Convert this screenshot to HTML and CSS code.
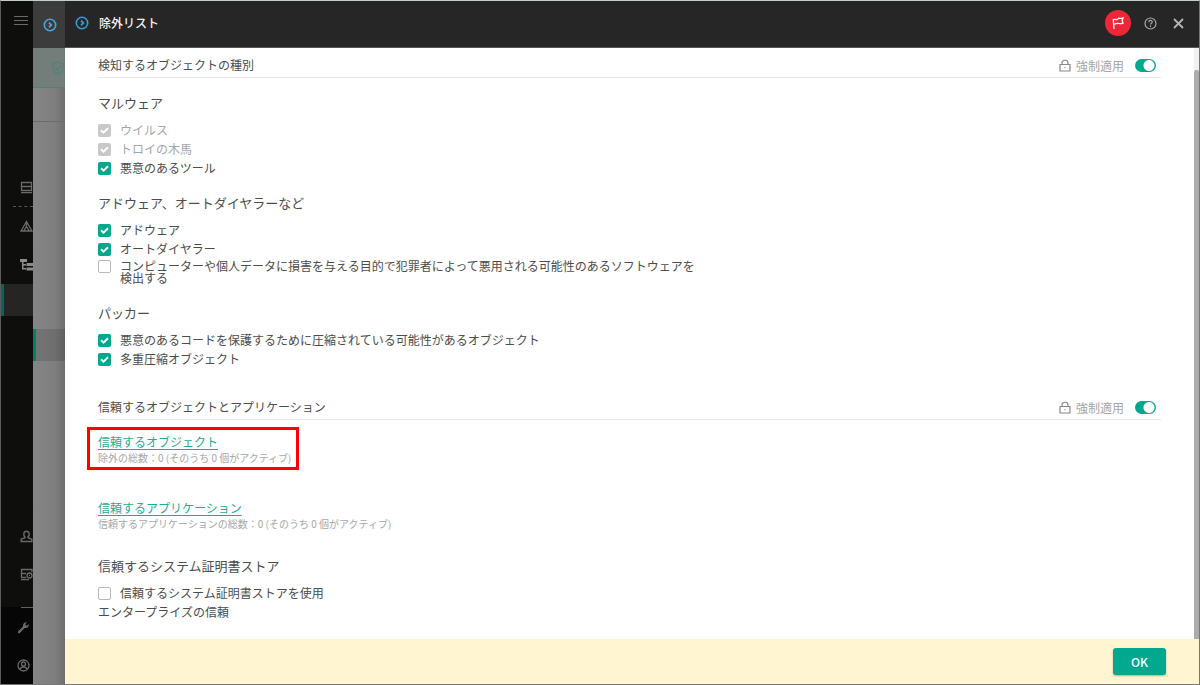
FILE: index.html
```html
<!DOCTYPE html>
<html lang="ja">
<head>
  <meta charset="UTF-8">
  <meta name="viewport" content="width=device-width, initial-scale=1.0">
  <title>除外リスト</title>
  <link rel="stylesheet" href="styles.css">
</head>
<body>
  <div class="app">
    <nav class="sidebar">
      <button class="nav-item menu" aria-label="メニュー">
        <svg width="14" height="12" viewBox="0 0 14 12" stroke="currentColor" fill="none"><path d="M0 1.500h14M0 5.500h14M0 9.500h14"/></svg>
      </button>
      <div class="nav-group">
        <a href="#" class="nav-item server" aria-label="サーバー">
          <svg width="13" height="13" viewBox="0 0 13 13" stroke="currentColor" fill="none" stroke-width="1.300"><path d="M1.500 1.500h10v8h-10zM1.500 5.500h10M1 11.700h11"/></svg>
        </a>
        <a href="#" class="nav-item" aria-label="監視">
          <svg width="13" height="13" viewBox="0 0 13 13" stroke="currentColor" fill="none" stroke-width="1.300"><path d="M6.500 1.500L12 11H1zM4 10.500l2.500-4 2.500 4M6.500 2v4"/></svg>
        </a>
        <a href="#" class="nav-item bright" aria-label="デバイス">
          <svg width="13" height="13" viewBox="0 0 13 13" fill="currentColor"><path d="M0 1h7v3H0zM2 4h1.500v2H6v1.500H3.500V10H6v1.500H2zM6.500 5H13v3H6.500zM6.500 9.500H13v3H6.500z"/></svg>
        </a>
        <a href="#" class="nav-item active" aria-label="ポリシー"></a>
      </div>
      <div class="nav-group bottom">
        <a href="#" class="nav-item" aria-label="ユーザー">
          <svg width="13" height="13" viewBox="0 0 13 13" stroke="currentColor" fill="none" stroke-width="1.400"><path d="M5 7C3 5 3.500 1.200 6.500 1.200S10 5 8 7v.7l3.800 1.500v2.300H1.200V9.200L5 7.700z"/></svg>
        </a>
        <a href="#" class="nav-item" aria-label="操作">
          <svg width="13" height="13" viewBox="0 0 13 13" stroke="currentColor" fill="none" stroke-width="1.300"><path d="M12 4V1.500H1.500v8H6M1.500 5.500H6M1 11.700h8"/><circle cx="9.500" cy="7.500" r="2.500"/><path d="M9 7.500h1"/></svg>
        </a>
      </div>
      <div class="nav-group tools">
        <a href="#" class="nav-item" aria-label="設定">
          <svg width="13" height="13" viewBox="0 0 13 13" fill="currentColor"><path d="M1 10.500l5-5C5.500 3 7.500.8 10 1.300L8.300 3l.4 1.300 1.300.4 1.800-1.700C12.300 5.500 10 7.500 7.600 7L2.600 12.200C1.800 12.800.4 11.500 1 10.500z"/></svg>
        </a>
        <a href="#" class="nav-item" aria-label="アカウント">
          <svg width="13" height="13" viewBox="0 0 13 13" stroke="currentColor" fill="none" stroke-width="1.300"><circle cx="6.500" cy="6.500" r="5.500"/><circle cx="6.500" cy="5" r="2"/><path d="M3 10.500c.5-2 1.500-2.500 3.500-2.500s3 .5 3.500 2.500"/></svg>
        </a>
      </div>
    </nav>

    <div class="backdrop">
      <div class="backdrop-head">
        <svg width="14" height="14" viewBox="0 0 14 14" stroke="currentColor" fill="none" stroke-width="1.600"><circle cx="7" cy="7" r="5.700"/><path d="M6 4.700L8.300 7 6 9.300" stroke-width="1.800"/></svg>
      </div>
      <div class="backdrop-status">
        <svg width="14" height="14" viewBox="0 0 14 14" stroke="currentColor" fill="none" stroke-width="1.200"><path d="M7 1l5 2v4c0 3-2 5-5 6-3-1-5-3-5-6V3zM4.500 7l2 2 3.500-3.500"/></svg>
      </div>
      <div class="backdrop-tabs"></div>
      <div class="backdrop-active"></div>
    </div>

    <main class="panel">
      <header class="panel-head">
        <svg class="panel-icon" width="14" height="14" viewBox="0 0 14 14" stroke="currentColor" fill="none" stroke-width="1.600"><circle cx="7" cy="7" r="5.700"/><path d="M6 4.700L8.300 7 6 9.300" stroke-width="1.800"/></svg>
        <h1>除外リスト</h1>
        <button class="flag" aria-label="通知">
          <svg width="14" height="14" viewBox="0 0 14 14" stroke="currentColor" fill="none" stroke-width="1.300"><path d="M3 13L2.300 3.700c1.500-.7 2.700.1 4.200-.2L7.500 2.200c1.500.5 3 .3 4.500-.3l-.8 2.600.8 2.600c-1.500.7-2.600.7-4.300.3C6 7.300 4 7.800 2.600 8.500"/></svg>
        </button>
        <button class="icon-button" aria-label="ヘルプ">
          <svg width="13" height="13" viewBox="0 0 13 13" stroke="currentColor" fill="none" stroke-width="1.200"><circle cx="6.500" cy="6.500" r="5.500"/><path d="M4.800 5.200c0-2.400 3.500-2.200 3.500-.2 0 1.200-1.800 1.300-1.800 2.600M6.500 8.600V10"/></svg>
        </button>
        <button class="icon-button close" aria-label="閉じる">
          <svg width="11" height="11" viewBox="0 0 11 11" stroke="currentColor" fill="none" stroke-width="1.800"><path d="M1 1l9 9M10 1l-9 9"/></svg>
        </button>
      </header>

      <div class="panel-scroll">
        <div class="panel-body">
          <section>
            <div class="section-head">
              <h2>検知するオブジェクトの種別</h2>
              <svg class="lock" width="12" height="13" viewBox="0 0 12 13" stroke="currentColor" fill="none" stroke-width="1.200"><path d="M1 5.500h10v6.500H1zM3 5.500V4c0-3.700 6-3.700 6 0v1.500M5.500 8.700h1"/></svg>
              <label for="force-types">強制適用</label>
              <input type="checkbox" class="toggle" id="force-types" checked>
            </div>

            <h3>マルウェア</h3>
            <div class="options">
              <label class="option disabled"><input type="checkbox" checked disabled>ウイルス</label>
              <label class="option disabled"><input type="checkbox" checked disabled>トロイの木馬</label>
              <label class="option"><input type="checkbox" checked>悪意のあるツール</label>
            </div>

            <h3>アドウェア、オートダイヤラーなど</h3>
            <div class="options">
              <label class="option"><input type="checkbox" checked>アドウェア</label>
              <label class="option"><input type="checkbox" checked>オートダイヤラー</label>
              <label class="option multiline"><input type="checkbox">コンピューターや個人データに損害を与える目的で犯罪者によって悪用される可能性のあるソフトウェアを検出する</label>
            </div>

            <h3>パッカー</h3>
            <div class="options">
              <label class="option"><input type="checkbox" checked>悪意のあるコードを保護するために圧縮されている可能性があるオブジェクト</label>
              <label class="option"><input type="checkbox" checked>多重圧縮オブジェクト</label>
            </div>
          </section>

          <section class="trusted">
            <div class="section-head">
              <h2>信頼するオブジェクトとアプリケーション</h2>
              <svg class="lock" width="12" height="13" viewBox="0 0 12 13" stroke="currentColor" fill="none" stroke-width="1.200"><path d="M1 5.500h10v6.500H1zM3 5.500V4c0-3.700 6-3.700 6 0v1.500M5.500 8.700h1"/></svg>
              <label for="force-trusted">強制適用</label>
              <input type="checkbox" class="toggle" id="force-trusted" checked>
            </div>

            <div class="links">
              <div class="link-block highlight">
                <a href="#">信頼するオブジェクト</a>
                <p>除外の総数：0 (そのうち 0 個がアクティブ)</p>
              </div>
              <div class="link-block">
                <a href="#">信頼するアプリケーション</a>
                <p>信頼するアプリケーションの総数：0 (そのうち 0 個がアクティブ)</p>
              </div>
            </div>

            <h3 class="store-title">信頼するシステム証明書ストア</h3>
            <div class="options">
              <label class="option"><input type="checkbox">信頼するシステム証明書ストアを使用</label>
              <p class="store-name">エンタープライズの信頼</p>
            </div>
          </section>
        </div>
        <div class="scrollbar"><div class="thumb"></div></div>
      </div>

      <footer class="panel-foot">
        <button class="ok">OK</button>
      </footer>
    </main>
  </div>
</body>
</html>
```
FILE: styles.css
```css
* {
  box-sizing: border-box;
}

body {
  margin: 0;
  font-family: "Noto Sans CJK JP", sans-serif;
  font-size: 12px;
  color: #4c4c4c;
}

h1, h2, h3, p {
  margin: 0;
  font-weight: 400;
}

button {
  padding: 0;
  border: 0;
  background: none;
  font-family: inherit;
  color: inherit;
}

svg {
  display: block;
  flex: none;
}

.app {
  display: flex;
  min-height: 100vh;
  border: 1px solid #777;
  border-top-color: #c5cdcb;
  border-left-color: #5c5c5c;
}

/* Main navigation, partly covered by the open panel */
.sidebar {
  display: flex;
  flex-direction: column;
  width: 32px;
  flex: none;
  background: #0e0e0c;
  color: #6a6a6a;
  overflow: hidden;
}

.nav-item {
  display: flex;
  align-items: center;
  flex: none;
  height: 38px;
  padding-left: 19px;
  color: inherit;
}

.nav-item.menu {
  padding-left: 13px;
  height: 39px;
}

.nav-group {
  margin-top: 128px;
}

.nav-item.server {
  border-bottom: 1px dashed #585858;
  margin-left: 12px;
  padding-left: 7px;
  height: 39px;
}

.nav-item.bright {
  height: 39px;
  color: #8b8b8b;
}

.nav-item.active {
  height: 32px;
  background: #252523;
  border-left: 3px solid #00695a;
}

.nav-group.bottom {
  margin-top: auto;
  padding-bottom: 14px;
}

.nav-group.tools {
  margin-top: 0;
  background: #060606;
}

.tools .nav-item {
  padding-left: 16px;
}

.tools::before {
  content: "";
  display: block;
  height: 1px;
  margin-left: 20px;
  background: #626262;
}

/* Dimmed page behind the panel */
.backdrop {
  width: 32px;
  flex: none;
  background: linear-gradient(to right, #858585, #7e7e7e 70%, #6e6e6e);
}

.backdrop-head {
  display: flex;
  align-items: center;
  justify-content: center;
  height: 47px;
  padding-left: 2px;
  background: #3c3c3c;
  color: #4aa5dc;
}

.backdrop-status {
  display: flex;
  align-items: center;
  justify-content: flex-end;
  height: 40px;
  background: #737e7b;
  border-bottom: 1px solid #4f8376;
  color: #4f8376;
}

.backdrop-tabs {
  height: 34px;
  border-bottom: 1px solid #6b6b6b;
}

.backdrop-active {
  height: 32px;
  margin-top: 207px;
  background: rgba(0, 0, 0, 0.12);
  border-left: 3px solid #00816d;
}

.panel {
  display: flex;
  flex-direction: column;
  flex: 1;
  min-width: 0;
  background: #fff;
}

.panel-head {
  display: flex;
  align-items: center;
  height: 47px;
  padding: 0 15px 2px 10px;
  background: #262626;
  border-bottom: 1px solid #555;
  color: #a8a8a8;
}

.panel-icon {
  color: #3a9ad9;
}

h1 {
  flex: 1;
  margin-left: 10px;
  font-size: 12px;
  line-height: 16px;
  font-weight: 500;
  color: #f2f2f2;
}

.flag {
  display: flex;
  align-items: center;
  justify-content: center;
  width: 26px;
  height: 26px;
  border-radius: 50%;
  background: #ee2737;
  color: #fff;
}

.icon-button {
  margin-left: 13px;
}

.icon-button.close {
  margin-left: 16px;
  color: #b5b5b5;
}

.panel-scroll {
  display: flex;
  flex: 1;
}

.panel-body {
  flex: 1;
  padding: 0 33px 16px;
}

.scrollbar {
  display: flex;
  width: 5px;
  padding-top: 22px;
  background: #f1f1f1;
}

.thumb {
  flex: 1;
  border-radius: 2px 2px 0 0;
  background: #ababab;
}

.section-head {
  display: flex;
  align-items: center;
  height: 30px;
  padding: 5px 5px 0 0;
  border-bottom: 1px solid #e8e8e8;
  color: #a6a6a6;
}

h2 {
  flex: 1;
  padding-bottom: 2px;
  font-size: 12px;
  color: #4c4c4c;
}

.lock {
  margin-right: 5px;
  color: #888;
}

.toggle {
  appearance: none;
  width: 21px;
  height: 13px;
  margin: 0 0 0 11px;
  border-radius: 7px;
  background: radial-gradient(circle at 14px 50%, #fff 5px, #00a88e 6px);
}

h3 {
  margin-top: 15px;
  font-size: 13px;
  line-height: 20px;
}

.options {
  margin-top: 8px;
}

.option {
  display: flex;
  align-items: center;
  width: fit-content;
  line-height: 18px;
  padding-bottom: 1px;
}

.option input {
  appearance: none;
  flex: none;
  width: 13px;
  height: 13px;
  margin: 0 9px 0 0;
  border: 1px solid #b8b8b8;
  border-radius: 2px;
  background: #fff;
}

.option input:checked {
  border: 0;
  background: #00a88e url("data:image/svg+xml,%3Csvg xmlns='http://www.w3.org/2000/svg' viewBox='0 0 13 13'%3E%3Cpath d='M3 6.2l2.500 2.500L10 4.200' fill='none' stroke='%23fff' stroke-width='2'/%3E%3C/svg%3E");
}

.option input:disabled {
  background-color: #c9c9c9;
}

.option.disabled {
  color: #a6a6a6;
}

.option.multiline {
  align-items: flex-start;
  max-width: 600px;
  padding: 1px 0 4px;
  line-height: 12px;
}

.trusted {
  margin-top: 21px;
}

.links {
  display: flex;
  flex-direction: column;
  align-items: flex-start;
  gap: 35px;
  padding-top: 14px;
}

.link-block {
  position: relative;
}

.link-block a {
  display: block;
  width: fit-content;
  line-height: 16px;
  color: #1fab94;
  text-underline-offset: 2px;
}

.link-block p {
  font-size: 10px;
  line-height: 15px;
  color: #a6a6a6;
}

.highlight::after {
  content: "";
  position: absolute;
  inset: -7px -8px -5px -11px;
  border: 3px solid #f00;
  pointer-events: none;
}

.store-title {
  margin-top: 25px;
}

.store-name {
  line-height: 18px;
}

.panel-foot {
  display: flex;
  align-items: center;
  justify-content: flex-end;
  height: 45px;
  padding-right: 33px;
  background: #fff5d0;
}

.ok {
  width: 53px;
  height: 27px;
  border-radius: 3px;
  background: #00a88e;
  box-shadow: 0 1px 2px rgba(0, 0, 0, 0.3);
  font-size: 12px;
  font-weight: 500;
  color: #fff;
}
```
